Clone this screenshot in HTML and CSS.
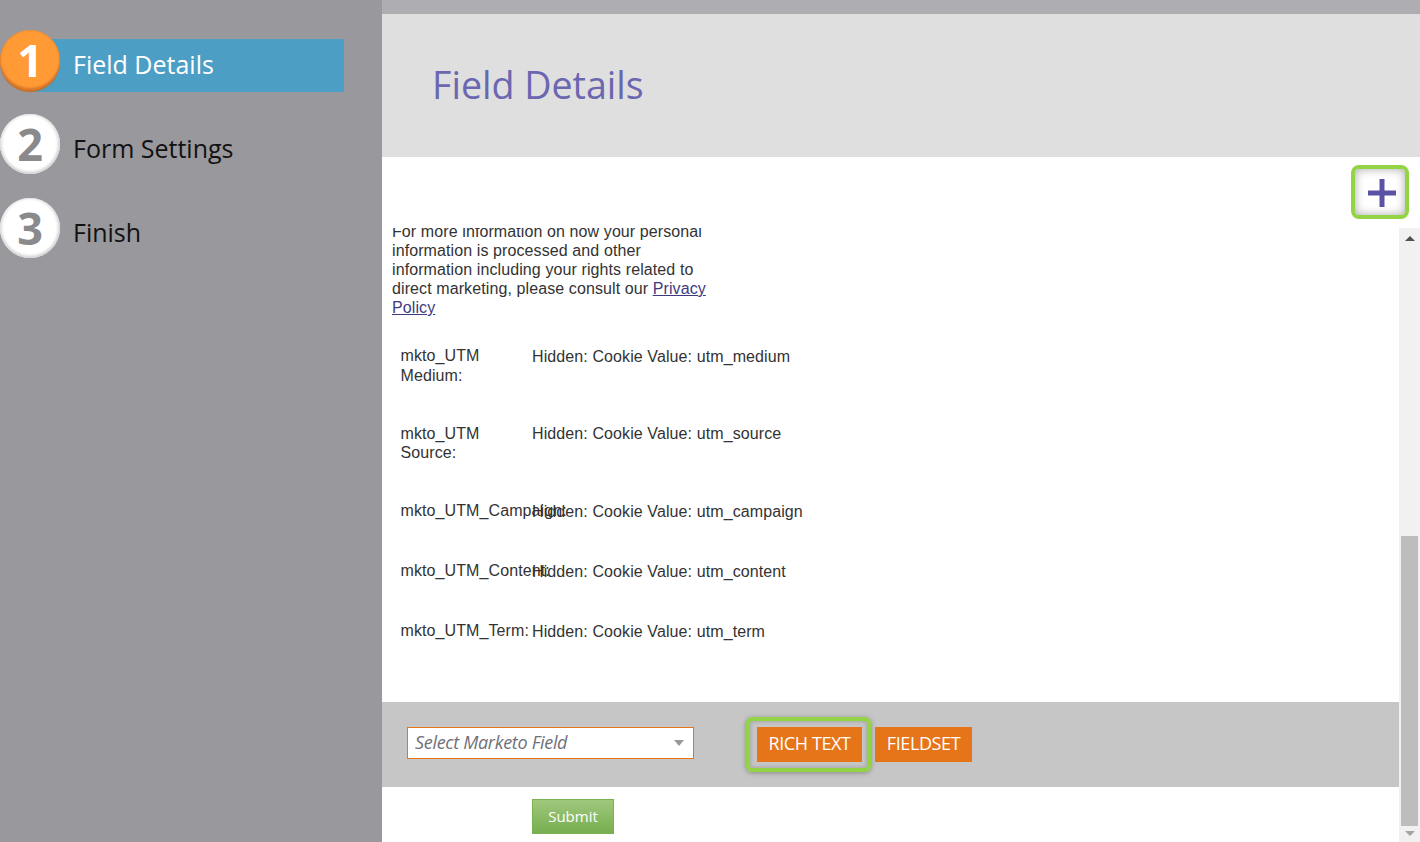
FILE: index.html
```html
<!DOCTYPE html>
<html lang="en">
<head>
<meta charset="utf-8">
<title>Field Details</title>
<link rel="stylesheet" href="styles.css">
</head>
<body>
<div class="app">
  <aside class="sidebar">
    <div class="step active">
      <span class="num">1</span><span class="label">Field Details</span>
    </div>
    <div class="step">
      <span class="num">2</span><span class="label">Form Settings</span>
    </div>
    <div class="step">
      <span class="num">3</span><span class="label">Finish</span>
    </div>
  </aside>
  <main class="main">
    <div class="strip"></div>
    <header class="head"><h1>Field Details</h1></header>
    <div class="tools">
      <button class="plus" aria-label="Add">
        <svg class="plus-icon" width="30" height="30" viewBox="0 0 30 30"><path d="M12.5 1h5v11.500h11.500v5H17.500v11.500h-5V17.500H1v-5h11.500z" fill="#5a52a5"/></svg>
      </button>
    </div>
    <div class="pane">
      <div class="content">
        <div class="scroller">
          <p class="note">For more information on how your personal information is processed and other information including your rights related to direct marketing, please consult our <a href="#">Privacy Policy</a></p>
          <div class="row tall"><div class="name wrap">mkto_UTM Medium:</div><div class="val">Hidden: Cookie Value: utm_medium</div></div>
          <div class="row tall"><div class="name wrap">mkto_UTM Source:</div><div class="val">Hidden: Cookie Value: utm_source</div></div>
          <div class="row"><div class="name">mkto_UTM_Campaign:</div><div class="val">Hidden: Cookie Value: utm_campaign</div></div>
          <div class="row"><div class="name">mkto_UTM_Content:</div><div class="val">Hidden: Cookie Value: utm_content</div></div>
          <div class="row"><div class="name">mkto_UTM_Term:</div><div class="val">Hidden: Cookie Value: utm_term</div></div>
        </div>
        <div class="bar">
          <div class="select"><span>Select Marketo Field</span><i class="caret"></i></div>
          <button class="btn hl">RICH TEXT</button>
          <button class="btn">FIELDSET</button>
        </div>
        <div class="foot"><button class="submit">Submit</button></div>
      </div>
      <div class="scrollbar">
        <div class="arrow up"></div>
        <div class="track"><div class="thumb"></div></div>
        <div class="arrow down"></div>
      </div>
    </div>
  </main>
</div>
</body>
</html>
```
FILE: styles.css
```css
* { box-sizing: border-box; }
html, body { margin: 0; height: 100%; overflow: hidden; }
body { font-family: "Liberation Sans", Arial, sans-serif; background: #fff; }
.app { display: grid; grid-template-columns: 382px 1fr; height: 842px; }

.sidebar { background: #99989d; padding-top: 30px; display: flex; flex-direction: column; gap: 24px; font-family: "Open Sans", sans-serif; }
.step { display: flex; align-items: center; height: 60px; position: relative; }
.num { width: 60px; height: 60px; border-radius: 50%; background: #fff; color: #8a898c; font-weight: 700; font-size: 45px; line-height: 60px; text-align: center; box-shadow: inset 0 -2px 3px #d2d2d4, inset -2px 0 3px #dcdcde, inset 2px 0 3px #e8e8ea; position: relative; z-index: 1; flex: none; }
.label { font-size: 25px; line-height: 34px; color: #111; margin-left: 13px; margin-top: 8px; position: relative; z-index: 1; }
.step.active .num { background: #ff9a35; color: #fff; box-shadow: 0 2px 1px #c96e22, inset 0 -2px 2px #d8782a, inset 0 0 2px #e08030; }
.step.active .label { color: #fff; }
.step.active::before { content: ""; position: absolute; left: 30px; top: 9px; width: 314px; height: 53px; background: #4c9ec5; }

.main { display: flex; flex-direction: column; min-width: 0; }
.strip { height: 14px; background: #aeadb2; }
.head { height: 143px; background: #dfdfdf; padding: 45px 0 0 50px; }
.head h1 { margin: 0; font: 400 37.600px/52px "Open Sans", sans-serif; color: #6a67b0; }
.tools { height: 71px; display: flex; justify-content: flex-end; padding: 8px 11px 0 0; }
.plus { width: 58px; height: 54px; padding: 2px 0 0 3px; border: 4px solid #92d444; border-radius: 8px; background: #fff; box-shadow: inset 0 0 10px #a8a8a8; display: flex; align-items: center; justify-content: center; }
.plus-icon { filter: blur(.5px); }

.pane { flex: 1; display: flex; min-height: 0; }
.content { flex: 1; display: flex; flex-direction: column; min-width: 0; }
.scroller { height: 474px; overflow: hidden; padding-left: 10px; font-size: 16px; line-height: 19px; color: #333; letter-spacing: .1px; }
.note { width: 318px; margin: -6px 0 0; }
.note a { color: #3f3a80; text-decoration: underline; }
.row { display: grid; grid-template-columns: 131.500px 1fr; padding-left: 8.500px; height: 60px; }
.row.tall { height: 77.300px; }
.name { white-space: nowrap; }
.name.wrap { white-space: normal; width: 100px; line-height: 19.400px; }
.val { padding-top: .7px; white-space: nowrap; }
.note + .row { margin-top: 29.300px; }

.bar { height: 85px; background: #c6c6c6; display: flex; align-items: flex-start; padding: 25px 0 0 25px; }
.select { width: 287px; height: 32px; background: #fff; border: 1px solid #e6751a; display: flex; align-items: center; justify-content: space-between; padding: 0 9px 2px 7px; font: italic 400 18px "Open Sans", sans-serif; letter-spacing: -.3px; color: #6f7078; margin-right: 63px; }
.caret { width: 0; height: 0; border: 5.500px solid transparent; border-top: 6px solid #999; border-bottom: 0; margin-top: 2px; }
.btn { height: 35px; width: 105px; padding: 0 0 3px; border: 0; background: #e6751a; color: #fff; font: 400 18px "Open Sans", sans-serif; letter-spacing: -.4px; margin-right: 13px; }
.btn:last-child { width: 97px; }
.btn.hl { position: relative; }
.btn.hl::after { content: ""; position: absolute; left: -11px; right: -9px; top: -10px; bottom: -10px; border: 4px solid #92d444; border-radius: 6px; box-shadow: 0 1px 5px #888, inset 0 0 4px #999; }

.foot { flex: 1; padding: 12px 0 0 150px; }
.submit { width: 82px; height: 35px; padding: 0 0 2px; border: 1px solid #7bb150; background: linear-gradient(#9fc87c, #78ae4f); color: #fff; font: 400 15px "Open Sans", sans-serif; }

.scrollbar { width: 21px; background: #f1f1f1; display: flex; flex-direction: column; }
.arrow { height: 21px; display: flex; align-items: center; justify-content: center; flex: none; }
.arrow.down { height: 16px; padding-bottom: 2px; }
.arrow::after { content: ""; border: 5px solid transparent; }
.arrow.up::after { border-bottom: 5px solid #505050; border-top: 0; }
.arrow.down::after { border-top: 5px solid #a3a3a3; border-bottom: 0; }
.track { flex: 1; display: flex; flex-direction: column; justify-content: flex-end; padding: 0 2px; }
.thumb { height: 290px; background: #bdbdbd; }
```
